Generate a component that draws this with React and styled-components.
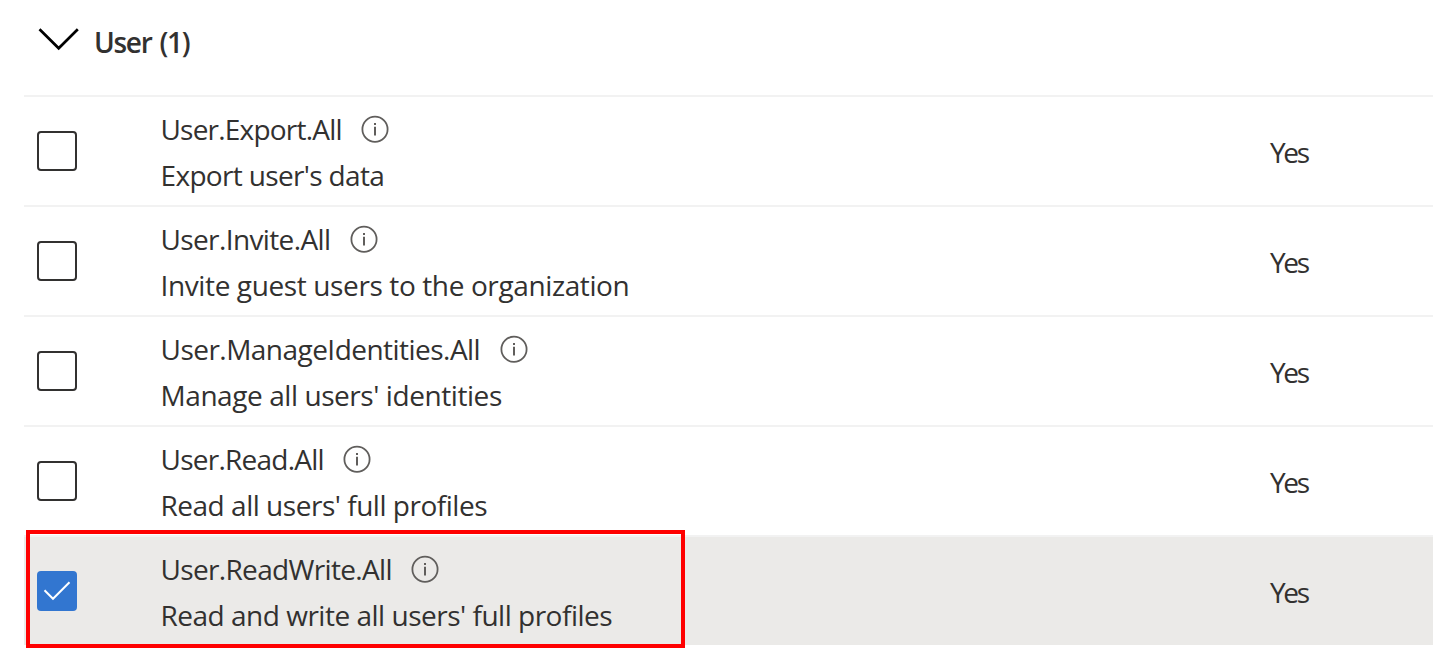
import React from "react";
import styled, { createGlobalStyle } from "styled-components";

const GlobalStyle = createGlobalStyle`
  * { box-sizing: border-box; }
  body {
    margin: 0;
    background: #fff;
    color: #323130;
    font-family: "Open Sans", "Noto Sans", sans-serif;
    font-size: 28px;
    overflow: hidden;
  }
`;

const Panel = styled.main`
  height: 669px;
  padding-left: 24px;
`;

const GroupHeader = styled.header`
  display: flex;
  align-items: flex-start;
  height: 95px;
  padding: 22px 0 0 13px;
`;

const Chevron = styled.svg`
  width: 42px;
  height: 30px;
  margin-top: 2px;
`;

const GroupTitle = styled.h2`
  margin: 0 0 0 15px;
  font-size: 28px;
  line-height: 40px;
  font-weight: 600;
  letter-spacing: -1.3px;
  word-spacing: 2px;
  white-space: nowrap;
`;

const List = styled.div`
  position: relative;
`;

const Row = styled.div`
  display: grid;
  grid-template-columns: 124px 1109px 1fr;
  height: 110px;
  padding-left: 13px;
  border-top: 2px solid #f2f2f2;
  background: ${(p) => (p.$selected ? "#ebeae8" : "#fff")};
  background-clip: padding-box;
`;

const Checkbox = styled.button`
  display: flex;
  width: 40px;
  height: 40px;
  margin-top: 34px;
  padding: 0;
  border: ${(p) => (p.$checked ? "none" : "2px solid #323130")};
  border-radius: 4px;
  background: ${(p) => (p.$checked ? "#3276d0" : "#fff")};
`;

const Details = styled.div`
  padding-top: 9px;
`;

const Line = styled.div`
  display: flex;
  align-items: flex-start;
  height: 46px;
  line-height: 46px;
  white-space: nowrap;
`;

const Text = styled.span`
  margin-left: -0.5px;
  letter-spacing: ${(p) => p.$tracking}px;
`;

const InfoIcon = styled.svg`
  flex: none;
  width: 28px;
  height: 28px;
  margin: 9px 0 0 19.5px;
`;

const Consent = styled.div`
  padding-top: 32px;
  line-height: 46px;
  letter-spacing: -2.3px;
`;

const Highlight = styled.div`
  position: absolute;
  left: 2px;
  top: 435px;
  width: 659px;
  height: 118px;
  border: 4px solid #ff0000;
  pointer-events: none;
`;

const permissions = [
  { name: "User.Export.All", nameTracking: -0.79, text: "Export user's data", textTracking: -0.66 },
  { name: "User.Invite.All", nameTracking: -0.62, text: "Invite guest users to the organization", textTracking: -0.38 },
  { name: "User.ManageIdentities.All", nameTracking: -0.53, text: "Manage all users' identities", textTracking: -0.43 },
  { name: "User.Read.All", nameTracking: -0.75, text: "Read all users' full profiles", textTracking: -0.48 },
  { name: "User.ReadWrite.All", nameTracking: -0.66, text: "Read and write all users' full profiles", textTracking: -0.49, checked: true },
];

function Info() {
  return (
    <InfoIcon viewBox="0 0 28 28" fill="none" stroke="#605e5c">
      <circle cx="14" cy="14.3" r="12.6" strokeWidth="1.8" />
      <path d="M14 11.8V20.6M14 8V9.9" strokeWidth="2" />
    </InfoIcon>
  );
}

function Check() {
  return (
    <svg width="40" height="40" viewBox="0 0 40 40" fill="none" stroke="#fff" strokeWidth="2">
      <path d="M7.5 19.3L16 27.8L32.5 11.2" />
    </svg>
  );
}

export default function App() {
  return (
    <Panel>
      <GlobalStyle />
      <GroupHeader>
        <Chevron viewBox="0 0 42 30" fill="none" stroke="#000" strokeWidth="2.7">
          <path d="M2.5 5.2L21.7 24.3L40.8 5.2" />
        </Chevron>
        <GroupTitle>User (1)</GroupTitle>
      </GroupHeader>
      <List>
        {permissions.map((p) => (
          <Row key={p.name} $selected={p.checked}>
            <Checkbox $checked={p.checked} role="checkbox" aria-checked={!!p.checked} aria-label={p.name}>
              {p.checked && <Check />}
            </Checkbox>
            <Details>
              <Line>
                <Text $tracking={p.nameTracking}>{p.name}</Text>
                <Info />
              </Line>
              <Line>
                <Text $tracking={p.textTracking}>{p.text}</Text>
              </Line>
            </Details>
            <Consent>Yes</Consent>
          </Row>
        ))}
        <Highlight />
      </List>
    </Panel>
  );
}
